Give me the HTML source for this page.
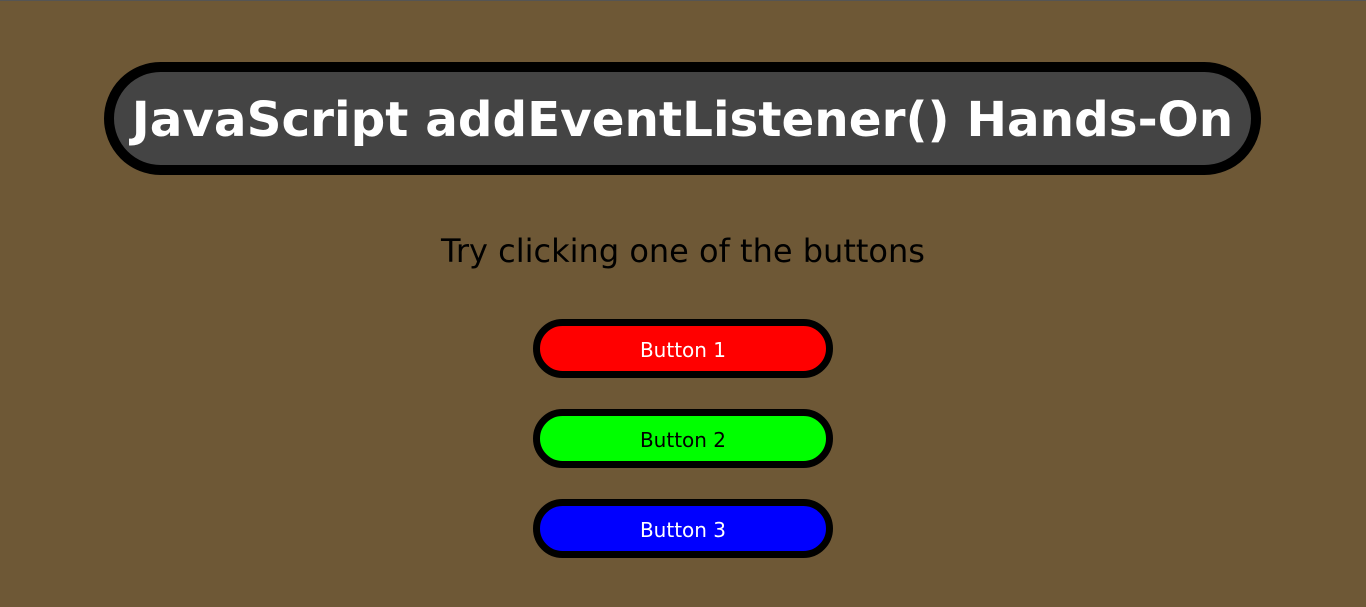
<!DOCTYPE html>
<html><head><style>
body{margin:0;width:1366px;height:607px;background:#6e5836;font-family:"DejaVu Sans",Verdana,sans-serif;position:relative;overflow:hidden;border-top:1px solid #555;box-sizing:border-box}
.t{position:absolute;left:104px;top:61px;width:1157px;height:113px;box-sizing:border-box;border:10px solid #000;border-radius:57px;background:#444;color:#fff;font-weight:bold;font-size:48.4px;text-align:center;line-height:97px;white-space:nowrap;letter-spacing:0}
.s{position:absolute;left:0;width:1366px;top:231px;text-align:center;font-size:32px;color:#000}
.b{position:absolute;left:533px;width:300px;height:59px;box-sizing:border-box;border:7px solid #000;border-radius:30px;text-align:center;line-height:48px;font-size:20px}
</style></head><body>
<div class="t">JavaScript addEventListener() Hands-On</div>
<div class="s">Try clicking one of the buttons</div>
<div class="b" style="top:318px;background:#f00;color:#fff">Button 1</div>
<div class="b" style="top:408px;background:#0f0;color:#000">Button 2</div>
<div class="b" style="top:498px;background:#00f;color:#fff">Button 3</div>
</body></html>
